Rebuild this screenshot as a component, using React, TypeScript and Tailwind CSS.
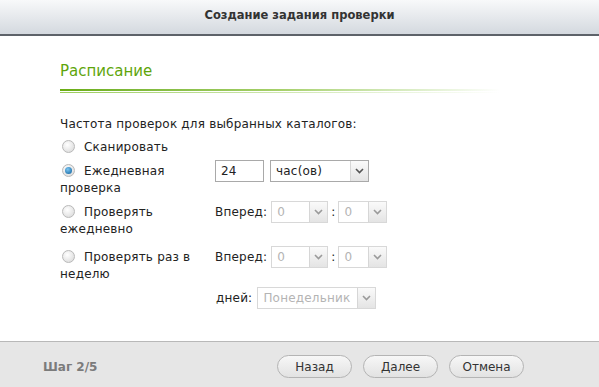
import type { ReactNode } from "react";

const font = "font-['DejaVu_Sans',Verdana,sans-serif]";

function Radio({ checked = false }: { checked?: boolean }) {
  return (
    <span className="inline-flex size-[13px] shrink-0 items-center justify-center rounded-full border border-[#b9b9b9] bg-[radial-gradient(circle_at_40%_35%,#ffffff,#d6d6d6)]">
      {checked && (
        <span className="size-[7px] rounded-full bg-[radial-gradient(circle_at_40%_35%,#7cc6f2,#0a5d9a)]" />
      )}
    </span>
  );
}

function Arrow({ disabled = false }: { disabled?: boolean }) {
  return (
    <span className="flex w-[18px] items-center justify-center self-stretch border-l border-[#d6d6d6] bg-gradient-to-b from-[#fafafa] to-[#e4e4e4]">
      <svg width="9" height="6" viewBox="0 0 9 6">
        <path d="M1 1 L4.5 4.5 L8 1" fill="none" stroke={disabled ? "#9a9a9a" : "#555"} strokeWidth="1.6" />
      </svg>
    </span>
  );
}

function Select({ value, width, disabled = false }: { value: string; width: string; disabled?: boolean }) {
  return (
    <div
      className={`flex h-[22px] items-stretch border ${width} ${
        disabled ? "border-[#d8d8d8] text-[#b4b4b4]" : "border-[#a9a9a9] text-[#222]"
      } bg-white`}
    >
      <span className="flex flex-1 items-center pl-[5px]">{value}</span>
      <Arrow disabled={disabled} />
    </div>
  );
}

function Option({ checked, first, second, className = "", children }: { checked?: boolean; first: string; second?: string; className?: string; children?: ReactNode }) {
  return (
    <div className={`grid grid-cols-[155px_1fr] items-start ${className}`}>
      <div className="flex flex-col">
        <div className="flex h-[22px] items-center gap-[9px] pl-[2px]">
          <Radio checked={checked} />
          <span>{first}</span>
        </div>
        {second && <span className="-mt-[2px] leading-[17px]">{second}</span>}
      </div>
      <div className="flex items-center">{children}</div>
    </div>
  );
}

function Button({ label }: { label: string }) {
  return (
    <button className="flex h-[23px] w-[75px] items-center justify-center rounded-full border border-[#b4b4b4] bg-gradient-to-b from-[#f7f7f7] to-[#e2e2e2] text-[12px] text-[#333]">
      {label}
    </button>
  );
}

function Forward() {
  return (
    <>
      <span className="mr-[4px]">Вперед:</span>
      <Select value="0" width="w-[57px]" disabled />
      <span className="mx-[3px]">:</span>
      <Select value="0" width="w-[49px]" disabled />
    </>
  );
}

export default function App() {
  return (
    <div className={`flex h-[387px] w-[599px] flex-col overflow-hidden bg-white text-[12px] tracking-[0.2px] text-[#222] ${font}`}>
      <div className="flex h-[36px] shrink-0 items-center justify-center border-b-2 border-[#5d6269] bg-gradient-to-b from-[#f8f9fa] to-[#d4d9df] pb-[2px] text-[11.5px] font-bold tracking-normal text-[#333]">
        Создание задания проверки
      </div>

      <div className="flex-1 px-[60px] pt-[24px]">
        <div className="text-[15px] tracking-normal text-[#5ea50a]">Расписание</div>
        <div className="mt-[6px] h-[2px] w-[440px] bg-gradient-to-r from-[#6aad12] via-[#a6d06a] to-white" />
        <div className="mt-[1px] h-px w-[440px] bg-gradient-to-r from-[#9ccc5c] via-[#cfe6b0] to-white" />

        <div className="mt-[22px]">Частота проверок для выбранных каталогов:</div>

        <div className="mt-[3px] flex flex-col">
          <Option first="Сканировать" />
          <Option checked first="Ежедневная" second="проверка" className="mt-[2px]">
            <div className="flex h-[22px] w-[49px] items-center border border-[#a9a9a9] pl-[5px]">24</div>
            <div className="ml-[6px]">
              <Select value="час(ов)" width="w-[99px]" />
            </div>
          </Option>
          <Option first="Проверять" second="ежедневно" className="mt-[4px]">
            <Forward />
          </Option>
          <Option first="Проверять раз в" second="неделю" className="mt-[8px]">
            <Forward />
          </Option>
          <div className="mt-[4px] grid grid-cols-[155px_1fr]">
            <span />
            <div className="flex items-center">
              <span className="ml-[1px] mr-[5px]">дней:</span>
              <Select value="Понедельник" width="w-[119px]" disabled />
            </div>
          </div>
        </div>
      </div>

      <div className="flex h-[46px] shrink-0 items-center border-t border-[#b8b8b8] bg-[#e6e6e6] pl-[43px] pr-[75px] pt-[4px]">
        <span className="text-[12px] font-bold tracking-normal text-[#7b7b7b]">Шаг 2/5</span>
        <div className="ml-auto flex gap-[11px] tracking-normal">
          <Button label="Назад" />
          <Button label="Далее" />
          <Button label="Отмена" />
        </div>
      </div>
    </div>
  );
}
